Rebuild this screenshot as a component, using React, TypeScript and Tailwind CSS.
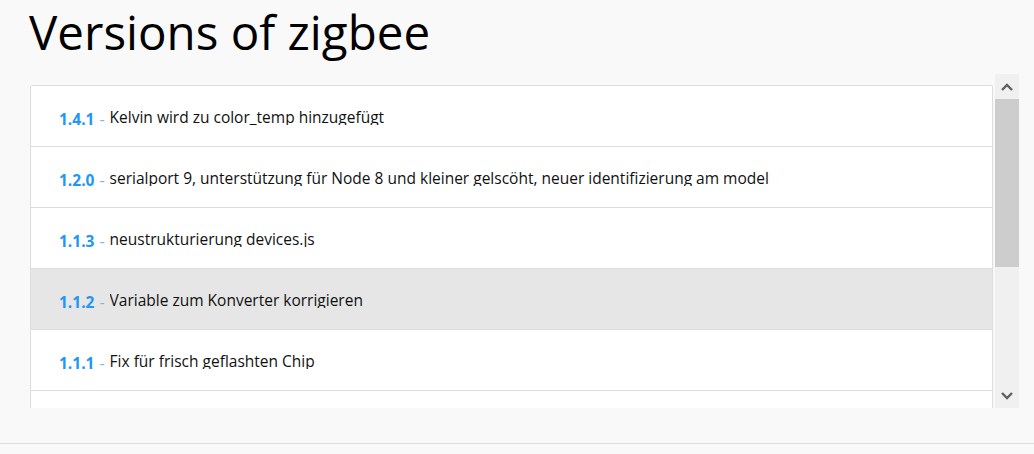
import type { ReactNode } from 'react'

interface Version {
  version: string
  text: string
  active?: boolean
}

const versions: Version[] = [
  { version: '1.4.1', text: 'Kelvin wird zu color_temp hinzugefügt' },
  {
    version: '1.2.0',
    text: 'serialport 9, unterstützung für Node 8 und kleiner gelscöht, neuer identifizierung am model',
  },
  { version: '1.1.3', text: 'neustrukturierung devices.js' },
  { version: '1.1.2', text: 'Variable zum Konverter korrigieren', active: true },
  { version: '1.1.1', text: 'Fix für frisch geflashten Chip' },
  { version: '1.1.0', text: 'Unterstützung für weitere Geräte' },
]

function VersionRow({ version, text, active }: Version) {
  return (
    <div
      className={`flex items-center h-[61px] border-b border-[#dddddd] pl-[28px] ${
        active ? 'bg-[#e6e6e6]' : 'bg-white'
      }`}
    >
      <span className="mt-[5px] text-[15.5px] font-bold text-[#2196f3] leading-[20px]">
        {version}
      </span>
      <span className="mt-[5px] ml-[5px] text-[16px] text-[#7db4e4] leading-[20px]">-</span>
      <span className="ml-[5px] block h-[18px] overflow-hidden text-[15.5px] leading-[21px] text-[#111111]">
        {text}
      </span>
    </div>
  )
}

function ScrollButton({ children }: { children: ReactNode }) {
  return <div className="h-[25px] flex items-center justify-center">{children}</div>
}

export default function App() {
  return (
    <div
      className="w-[1034px] h-[454px] bg-[#f9f9f9] overflow-hidden flex flex-col"
      style={{ fontFamily: '"Open Sans", "Noto Sans", sans-serif' }}
    >
      <h1 className="h-[74px] pl-[29px] pt-[1px] text-[47.5px] leading-[62px] text-black font-normal">
        Versions of zigbee
      </h1>

      <div className="flex h-[334px] pl-[30px] pr-[15px]">
        <div className="flex-1 pt-[11px] overflow-hidden">
          <div className="border border-[#dddddd] border-b-0 bg-white rounded-tl-[2px] rounded-tr-[2px]">
            {versions.map((v) => (
              <VersionRow key={v.version} {...v} />
            ))}
          </div>
        </div>

        <div className="ml-[2px] w-[24px] bg-[#f0f0f0] flex flex-col">
          <ScrollButton>
            <svg width="12" height="8" viewBox="0 0 12 8">
              <path d="M1 7 L6 2 L11 7" fill="none" stroke="#606060" strokeWidth="2.4" />
            </svg>
          </ScrollButton>
          <div className="h-[168px] bg-[#cdcdcd]" />
          <div className="flex-1" />
          <ScrollButton>
            <svg width="12" height="8" viewBox="0 0 12 8">
              <path d="M1 1 L6 6 L11 1" fill="none" stroke="#606060" strokeWidth="2.4" />
            </svg>
          </ScrollButton>
        </div>
      </div>

      <div className="mt-[35px] border-t border-[#dddddd] flex-1" />
    </div>
  )
}
